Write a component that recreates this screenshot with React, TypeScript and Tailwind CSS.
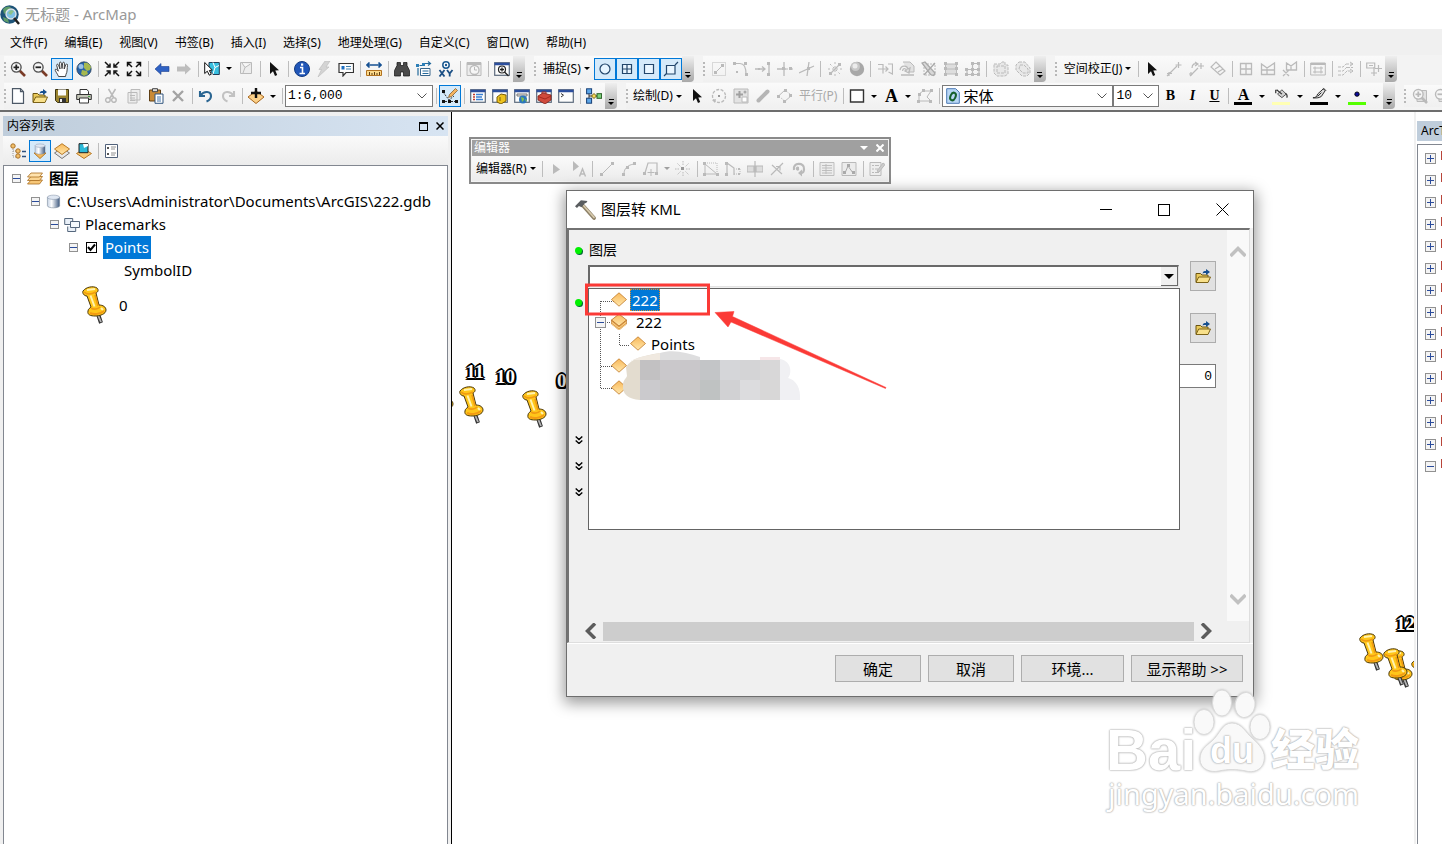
import React from "react";
import type { ReactNode } from "react";

const G = "#bababa";
const sq = (x: number, y: number, c = G, s = 3) => <rect key={`${x}-${y}`} x={x} y={y} width={s} height={s} fill={c} />;
const magnifier = (c: string, plus: boolean) => (
  <>
    <path d="M9.5 9.5 15 15" stroke={c === G ? G : "#7a3b26"} strokeWidth="2.6" />
    <circle cx="6.3" cy="6.3" r="4.8" fill="#f7f7f7" stroke={c} strokeWidth="1.4" />
    <path d={plus ? "M3.5 6.3h5.6M6.3 3.5v5.6" : "M3.5 6.3h5.6"} stroke={c === G ? G : "#222"} strokeWidth="1.8" />
  </>
);
const cursor = (c: string) => <path d="M4 1v12l3-2.7L9 15l2.2-1L9.300 9.500 13 9.200z" fill={c} />;
const win = (
  <>
    <rect x=".7" y="1.700" width="14.600" height="12.600" fill="#fdfdfd" stroke="#5d6b7d" strokeWidth="1.200" />
    <path d="M.5 3h15" stroke="#2c4f9e" strokeWidth="2.500" />
  </>
);
const folder = (
  <>
    <path d="M1 14V5.500h4.500L7 7h6v2" fill="#e9c95a" stroke="#6b5410" />
    <path d="M1 14.500 3.700 9H15.500l-2.500 5.500z" fill="#f8e08a" stroke="#7b6218" />
    <path d="M7.500 5.500C8 3 9.500 3 11 3V1l4 3-4 3V5c-1.500 0-2.500 0-3.500.500z" fill="#164f8f" />
  </>
);
const diamond = (y = 0) => <path d={`M8 ${0.8 + y} 15.500 ${7.5 + y} 8 ${14.2 + y} .500 ${7.5 + y}z`} fill="url(#amber)" stroke="#c07a2a" strokeWidth=".8" />;
const cylinder = (
  <>
    <path d="M1.500 3.500v9c0 3 13 3 13 0v-9z" fill="url(#steel)" stroke="#7a8798" strokeWidth=".6" />
    <ellipse cx="8" cy="3.500" rx="6.500" ry="2.300" fill="#dfe7f2" stroke="#8492a8" strokeWidth=".6" />
  </>
);

const art: Record<string, ReactNode> = {
  zoomIn: magnifier("#555", true),
  zoomOut: magnifier("#555", false),
  hand: <path d="M4.500 15.500C3.500 12.500.500 9.500 1.300 8.500s2 .4 3 1.700L2.700 4.500c-.3-1.500 1.300-1.800 1.800-.4L6 8 5.500 2.200C5.500.7 7.200.7 7.400 2.200L8 7.600 8.700 2C9 .8 10.500 1 10.500 2.300L10.200 8l1.600-4.300c.5-1.300 2-.8 1.700.6C13 7 13.500 11 12 13.300l-.5 2.200z" fill="#fff" stroke="#333" strokeWidth=".9" />,
  globe: (
    <>
      <circle cx="8" cy="8" r="7.200" fill="#2863a8" stroke="#23364f" strokeWidth=".7" />
      <path d="M8 2c3-1 6 1 7 4l-1 3-3 1-3-3zM6 9l5 1 1 3-4 2-3-2z" fill="#a5b84f" />
      <circle cx="5" cy="5.500" r="2.500" fill="#b7d7f5" opacity=".8" />
    </>
  ),
  shrink: <path d="M1 1l4 4M6 2.500v3.500H2.500M15 1l-4 4M10 2.500v3.500h3.500M1 15l4-4M2.500 10h3.500v3.500M15 15l-4-4M13.500 10H10v3.500" fill="none" stroke="#111" strokeWidth="1.500" />,
  expand: <path d="M2 2l4 4M1.500 5.500v-4h4M14 2l-4 4M14.500 5.500v-4h-4M2 14l4-4M1.500 10.500v4h4M14 14l-4-4M14.500 10.500v4h-4" fill="none" stroke="#111" strokeWidth="1.500" />,
  back: <path d="M1 8l6-5.500v3h8v5H7v3z" fill="#2f62c4" stroke="#1c3f8e" strokeWidth=".6" />,
  forward: <path d="M15 8 9 2.500v3H1v5h8v3z" fill="#bdbdbd" />,
  selectFeature: (
    <>
      <path d="M5 1.500h10.300v12H9L5 7z" fill="#37bfe0" stroke="#223c55" />
      <path d="M9 1.500l2 5 4-2M9 13l2-6.500" stroke="#fff" fill="none" />
      <path d="M.7 1.500v11l2.600-2.300 2 4 2-1-2-3.700 3-.5z" fill="#fff" stroke="#111" />
    </>
  ),
  clearSelect: <path d="M2.500 1.500h11v11h-11zM4 2l3 4.500 5.500-3.500M7 6.500 5 12" stroke={G} fill="#ededed" />,
  cursor: cursor("#111"),
  info: (
    <>
      <circle cx="8" cy="8" r="7.500" fill="#2056b8" stroke="#123a80" />
      <path d="M6 6.500h2.500v5.500M5.500 12.500h5.500" stroke="#fff" strokeWidth="1.600" fill="none" />
      <rect x="7" y="2.500" width="2.200" height="2.200" fill="#fff" />
    </>
  ),
  bolt: <path d="M9 0h5l-4 6h3L2 16l3.500-7.500H3z" fill="#d4d4d4" stroke={G} strokeWidth=".6" />,
  popup: (
    <>
      <path d="M1 2.500h14.500v9H8L5 15v-3.500H1z" fill="#fdfdfd" stroke="#333" strokeWidth="1.200" />
      <path d="M3.500 5h3v3.500h-3z" fill="#1c6fc2" />
      <path d="M8 5.500h5M8 8h5" stroke="#3d7fae" />
    </>
  ),
  measure: (
    <>
      <path d="M1 4h14M3.500 1.500 1 4l2.500 2.500M12.500 1.500 15 4l-2.500 2.500" stroke="#175293" strokeWidth="1.700" fill="none" />
      <path d="M.5 9.500h15v5H.5z" fill="#fcd98a" stroke="#b37320" />
      <path d="M3.500 14v-3M6 14v-2M8.500 14v-3M11 14v-2M13.500 14v-3" stroke="#5d3d10" />
    </>
  ),
  binoculars: <path d="M3 1.500h3.500v3h3v-3H13v3l2.500 5V15H9.500v-4h-3v4H.5V9.500L3 4.500z" fill="#4a4a4a" stroke="#111" strokeWidth=".7" />,
  route: (
    <>
      <path d="M4.500 7.500h9.500v7H4.500z" fill="#fff" stroke="#3a678c" />
      <path d="M6.500 10h6M6.500 12.500h6M2 14.500V7M3.500 4.500h3M9 2.500h5M12 .5l2.500 2L12 4.500" stroke="#246a9c" strokeWidth="1.200" fill="none" />
      {sq(0, 3, "#2d7fb8")}
      {sq(6, 2, "#2d7fb8")}
    </>
  ),
  xy: (
    <>
      <circle cx="8" cy="4" r="3.200" fill="#fff" stroke="#1b5990" strokeWidth="1.500" />
      <circle cx="8" cy="4" r="1.200" fill="#1b5990" />
      <path d="M1.500 9l5 6.500M6.500 9l-5 6.500M9 9l2.700 3.500L14.500 9M11.700 12.500v3" stroke="#1b4f85" strokeWidth="1.800" fill="none" />
    </>
  ),
  time: (
    <>
      <path d="M1 1.500h14v13H1z" fill="#ececec" stroke={G} />
      <path d="M1 3h14" stroke={G} strokeWidth="2" />
      <circle cx="8.500" cy="9" r="4.500" fill="#f6f6f6" stroke={G} strokeWidth="1.300" />
      <path d="M8.500 6v3H11" stroke={G} fill="none" />
    </>
  ),
  viewer: (
    <>
      {win}
      <circle cx="8" cy="8.500" r="3.500" fill="#fff" stroke="#222" strokeWidth="1.200" />
      <path d="M6 8.500h4M8 6.500v4M10.500 11l4 4" stroke="#222" strokeWidth="1.300" />
    </>
  ),
  snapPoint: <circle cx="8" cy="8" r="5" fill="#e7f5ff" stroke="#23466b" strokeWidth="1.200" />,
  snapEnd: <path d="M3.500 3.500h9v9h-9zM8 3.500v9M3.500 8h9" fill="#eaf6ff" stroke="#23466b" strokeWidth="1.200" />,
  snapVertex: <path d="M3.500 3.500h9v9h-9z" fill="#eaf6ff" stroke="#23466b" strokeWidth="1.200" />,
  snapEdge: <path d="M3.500 4.500h8.500V13H3.500zM1 15l3-3M12 4l3-3" fill="#eaf6ff" stroke="#23466b" strokeWidth="1.200" />,
  a1: <><path d="M1.500 1.500h13v13h-13z" fill="none" stroke={G} strokeDasharray="1 1" /><path d="M4 12l8-8" stroke={G} />{sq(3, 10)}{sq(10, 3)}</>,
  a2: <><path d="M1 2.500h6c4 0 6 3 6 11" fill="none" stroke={G} strokeWidth="1.200" />{sq(0, 1)}{sq(11, 1)}{sq(12, 12)}{sq(3, 10, G, 2)}</>,
  a3: <><path d="M0 8h10M7 5.500 10 8l-3 2.500M14 2v12" fill="none" stroke={G} strokeWidth="1.300" />{sq(12, 1)}{sq(12, 12)}{sq(3, 7, G, 2)}</>,
  a4: <><path d="M0 8h9M7 1v14" stroke={G} strokeWidth="1.300" /><path d="M9 8h7" stroke={G} strokeDasharray="2 1" />{sq(5, 6)}{sq(12, 6)}</>,
  a5: <><path d="M0 12 15 5M10 1 8 15" stroke={G} strokeWidth="1.300" />{sq(8, 6)}</>,
  a6: <><path d="M3 13 13 3" stroke={G} strokeWidth="1.300" /><path d="M3 3l10 10M8 1v14M1 8h14" stroke={G} strokeDasharray="2 2" />{sq(2, 11)}{sq(11, 2)}</>,
  sphere: <><circle cx="8" cy="8" r="7.200" fill="#a8a8a8" /><circle cx="6.500" cy="5.500" r="4.500" fill="#c8c8c8" /><circle cx="6" cy="5" r="2.500" fill="#ececec" /></>,
  b1: <path d="M1 3.500h5v9M1 8h10M8.500 5.500 11 8l-2.500 2.500M11 3h4.500v10l-4-2" fill="none" stroke={G} strokeWidth="1.200" />,
  b2: <><path d="M4 1h7l4 4v6H9" fill="#e2e2e2" stroke={G} /><path d="M1 9c1-5 7-5 8-1l2-1-1 5-4-2 1.500-1C6 7 4 7 3.500 10M2 14h13" fill="none" stroke={G} strokeWidth="1.300" /></>,
  b3: <><path d="M3 3h11v11H3z" fill="none" stroke={G} strokeDasharray="2 1" /><path d="M1 2l3-1 10 11-1.500 2.500-3-1zM14 2 3 14" fill="#d8d8d8" stroke="#a9a9a9" strokeWidth="1.300" /></>,
  b4: <><path d="M2.500 3h11v10h-11z M2.500 8h11" fill="#ddd" stroke={G} />{sq(1, 1)}{sq(12, 1)}{sq(1, 6)}{sq(12, 6)}{sq(1, 12)}{sq(12, 12)}</>,
  b5: <><path d="M7.500 2v12M2 8.500h12M2 14V8.500M2 13.500h12V2.500H7.500" fill="none" stroke={G} strokeWidth="1.200" />{sq(6, 1)}{sq(12, 1)}{sq(0, 7)}{sq(6, 7)}{sq(12, 7)}{sq(0, 12)}{sq(6, 12)}{sq(12, 12)}</>,
  b6: <path d="M1 3h6l2-2h3v3h3v9l-3 2H4L1 12zM4 5h8v7H4z" fill="#e8e8e8" stroke={G} strokeDasharray="3 1" />,
  b7: <path d="M4 1h6l5 6v5l-3 3H7L1 9V4zM5 4h4l4 4v4H8L4 8z" fill="#e8e8e8" stroke={G} strokeDasharray="3 1" />,
  cursor2: cursor("#111"),
  c1: <path d="M1 15 11 5M12.500 1v6M9.500 4h6M3 11v4M1 12.500h5" stroke={G} fill="none" strokeWidth="1.200" />,
  c2: <path d="M2 15l8-8M13 2v6M10 5h6M4 7c0-4 3-5 5-4M7 1l3 2-3 2M3 11v4M1 13h4" stroke={G} fill="none" strokeWidth="1.200" />,
  c3: <path d="M6 1l9 9-5 4-9-8zM5 8l5-3M8 11l5-3" stroke={G} fill="none" strokeWidth="1.200" />,
  c4: <path d="M2.500 2.500h11v11h-11zM8 2v12M2 8h12" stroke={G} fill="none" strokeWidth="1.300" />,
  c5: <path d="M1.500 3 7 7l7.500-5v11.500h-13zM1.500 9h13M7 7v6" stroke={G} fill="none" strokeWidth="1.300" />,
  c6: <path d="M4.500 2 9 5l5.500-4v8h-10zM9 5v4M1 9l6 6M7 9l-6 6" stroke={G} fill="none" strokeWidth="1.300" />,
  c7: <><path d="M.7 2h14.600v12H.7z" fill="none" stroke={G} /><path d="M.7 3h14.600" stroke={G} strokeWidth="2" /><path d="M3 7h10M3 11h10M5 5.500v7M11 5.500v7" stroke={G} /></>,
  c8: <><path d="M0 6h5l3-3M0 10h5l4-4M0 14h5l5-5M8 3h7M9 6.500h6M10 10h5" stroke={G} fill="none" strokeDasharray="3 1" /><path d="M12 1l3 2-3 2M12 8l3 2-3 2" stroke={G} /></>,
  c9: <path d="M.7 2h8v5h-8zM3 4.500h4M8 12V6M12.500 4v7M9 7.500h7M8 9v6M5 12h6" stroke={G} fill="none" strokeWidth="1.200" />,
  newDoc: <path d="M2.500.7h8l3 3v11.600h-11zM10.500.7v3h3" fill="#fdfeff" stroke="#4c5866" strokeWidth="1.200" />,
  open: folder,
  save: <><path d="M1.500 1.500h13v13h-11l-2-2z" fill="#9a8430" stroke="#3d3512" /><path d="M4 1.500h8v6H4z" fill="#fafafa" /><path d="M5 10h7v4.500H5z" fill="#333" /><path d="M6 11h2v3H6z" fill="#eee" /></>,
  print: <><path d="M4 6V1.500h7l1.500 2V6" fill="#fff" stroke="#333" /><path d="M.7 6.500h14.600v5H.7z" fill="#c4c6b8" stroke="#333" /><path d="M3.500 10h9v5h-9z" fill="#fff" stroke="#333" /><path d="M12 8.500h2" stroke="#43a047" /></>,
  cut: <path d="M4.500 1 10 10M11.500 1 6 10M5 10a2.300 2.300 0 1 0 .1 4 2.300 2.300 0 0 0-.1-4M11 10a2.300 2.300 0 1 0 .1 4 2.300 2.300 0 0 0-.1-4" stroke={G} fill="none" strokeWidth="1.500" />,
  copy: <path d="M5 1.500h9v10.500H5zM2 4.500h9V15H2zM4 7.500h5M4 10h5M4 12.500h5" fill="#ededed" stroke={G} />,
  paste: <><path d="M1.500 2h11v11h-11z" fill="#c98a35" stroke="#5e3e13" /><path d="M4.500.7h5v3h-5z" fill="#ddd" stroke="#444" /><path d="M7 6h8v9.300H7z" fill="#fff" stroke="#31557d" /><path d="M9 9h4M9 11h4M9 13h4" stroke="#4577ad" /></>,
  del: <path d="M3 3l10 10M13 3 3 13" stroke="#a3a3a3" strokeWidth="2.400" />,
  undo: <path d="M2 3v5h5M2.500 7.500C6 2.500 13 3 13 8c0 3-2 4.500-4.500 5.500" fill="none" stroke="#2a6591" strokeWidth="2.100" />,
  redo: <path d="M14 3v5H9M13.500 7.500C10 2.500 3 3 3 8c0 3 2 4.500 4.500 5.500" fill="none" stroke="#c2c2c2" strokeWidth="2.100" />,
  addData: <><path d="M8 3 16 9 8 15.500 0 9z" fill="#fbd089" stroke="#a8671e" /><path d="M8 0v10M3 5h10" stroke="#111" strokeWidth="2.400" /></>,
  sketch: <><path d="M1 4l6 8 5-4M3 13.500h11" stroke="#333" fill="none" strokeDasharray="2 1" />{sq(0, 2, "#111")}{sq(0, 12, "#111")}{sq(6, 12, "#111")}{sq(13, 12, "#111")}<path d="M6.500 9.500l1-3 6-6 2 2-6 6z" fill="#f5b461" stroke="#7a5020" strokeWidth=".7" /></>,
  winToc: <>{win}<path d="M3 6.500h2M3 9h2M3 11.500h2" stroke="#c43b2a" strokeWidth="1.300" /><path d="M6 6.500h7M6 9h6M6 11.500h7" stroke="#3b80d2" strokeWidth="1.300" /></>,
  winCat: <>{win}<path d="M5 9l4-3 5 1v6l-5 3-4-2z" fill="#edc21e" stroke="#7a5e08" /><path d="M8 9v4" stroke="#7a5e08" /></>,
  winSearch: <>{win}<path d="M3 6h10v2H3z" fill="#eee" stroke="#777" /><circle cx="9" cy="11.500" r="4" fill="#2b76bd" /><path d="M7 9l3 1v2l-2 2zM11 11l2 1-1 2z" fill="#7fbb52" /></>,
  winBox: <>{win}<path d="M2 8l5-3 8 2v5l-6 4-7-4z" fill="#d04a3c" stroke="#7d1f18" strokeWidth=".8" /><path d="M2 8.500l7 2.500 6-3M6 6V4h4v2" stroke="#a3281f" fill="none" /></>,
  winPy: <>{win}<path d="M3 5.500l2.500 1.700L3 9" stroke="#333" fill="none" /></>,
  model: <><path d="M3 4v8M3 8h10" stroke="#333" /><rect x=".6" y=".8" width="5" height="5" fill="#5da6e8" stroke="#163f75" /><rect x=".6" y="10.200" width="5" height="5" fill="#5da6e8" stroke="#163f75" /><path d="M5.500 8 8 5.500 10.500 8 8 10.500z" fill="#f7dc5a" stroke="#765f10" /><rect x="11" y="5.700" width="4.600" height="4.600" fill="#7ed17b" stroke="#275e24" /></>,
  rotate: <><circle cx="8" cy="8" r="6.500" fill="none" stroke={G} strokeDasharray="3 1.500" strokeWidth="1.300" />{sq(7, 7, "#999", 2)}<path d="M1 12l3 3 1-4z" fill={G} /></>,
  group: <><path d="M1 1h14v14H1z" fill="#e3e3e3" stroke={G} /><path d="M6.500 3v7M3 6.500h7" stroke="#a0a0a0" strokeWidth="2" /><path d="M9 9h5v5H9z" fill="#fff" stroke={G} /><circle cx="12" cy="4" r="1.500" fill="#aaa" /></>,
  pill: <path d="M3.500 12.500 12.500 3.500" stroke="#b5b5b5" strokeWidth="4" strokeLinecap="round" />,
  nodes: <><path d="M1 8.500l7-6.500M7 14l7-6" stroke={G} fill="none" /><path d="M4 10l4 3M9 3l4 3" stroke={G} strokeDasharray="1 1" />{sq(0, 7)}{sq(7, 1)}{sq(6, 12)}{sq(12, 6)}</>,
  rect: <path d="M1.500 2h13v12h-13z" fill="#fff" stroke="#333" strokeWidth="1.400" />,
  editPoly: <><path d="M2 13V6l4-3h8l-4 6 4 4z" fill="none" stroke={G} />{sq(0, 12)}{sq(1, 5)}{sq(5, 1)}{sq(13, 1)}{sq(12, 12)}</>,
  zoomPageIn: <><path d="M5 2.500h9.500v11H5z" fill="#e2e2e2" stroke={G} />{magnifier(G, true)}</>,
  zoomPageOut: <><path d="M5 2.500h9.500v11H5z" fill="#e2e2e2" stroke={G} />{magnifier(G, false)}</>,
  bucket: <><path d="M4 7l5-5 5 5-5 4z" fill="#cfcfcf" stroke="#444" /><path d="M3 2l6 5M13 6c3 2 2 4 1.500 5M2 6V2" stroke="#333" fill="none" strokeWidth="1.400" /></>,
  pen: <path d="M1 11.500c3 0 4-1 5-4L12 2l2 2-4 6c-2 1.500-5 2-9 1.500zM6 10l4-4M12 1l3 3" fill="#ddd" stroke="#222" />,
  dot: <circle cx="8" cy="7" r="2.500" fill="#0b0b9c" stroke="#000" />,
  list1: <><path d="M3 4v10h5M3 8h4" stroke="#999" fill="none" strokeDasharray="1 1" /><circle cx="3" cy="3" r="2.200" fill="#f3c06a" stroke="#a8712a" /><circle cx="8" cy="8" r="2.200" fill="#f3c06a" stroke="#a8712a" /><circle cx="8" cy="13" r="2.200" fill="#f3c06a" stroke="#a8712a" /><path d="M12 8.500h4M12 13.500h4" stroke="#2c4f7e" strokeWidth="1.600" /></>,
  list2: <><path d="M2 10l6 5.500 6-5.500z" fill="#f3b95c" stroke="#b87a26" /><g transform="translate(2 0) scale(.76)">{cylinder}</g></>,
  list3: <><path d="M8 5l7.500 5L8 15.500.5 10z" fill="#e8e8e8" stroke="#777" /><path d="M8 .7 15.500 6 8 11.500.5 6z" fill="url(#amber)" stroke="#b87a26" /></>,
  list4: <><path d="M8 6l7.500 4.500L8 15.500.5 10.500z" fill="#f9c976" stroke="#b87a26" /><path d="M3 .7h9v9H3z" fill="#2cb9d8" stroke="#222" /><path d="M7 1l1 4 4-2V1z" fill="#fff" /></>,
  list5: <><path d="M1.500 1.500h12v13h-12z" fill="#fff" stroke="#50617a" />{sq(3, 4, "#555", 2)}{sq(3, 10, "#555", 2)}<path d="M7 4h5M7 6h4M7 10h5M7 12h4" stroke="#777" strokeWidth=".8" /></>,
  layers: <><path d="M.5 14l3.500-4h11.500l-3 4z" fill="#f7c778" stroke="#a86d20" strokeWidth=".8" /><path d="M.5 10.500 4 6.500h11.500l-3 4z" fill="#fbd592" stroke="#a86d20" strokeWidth=".8" /><path d="M.5 7 4 3h11.500l-3 4z" fill="#ffe3ae" stroke="#a86d20" strokeWidth=".8" /></>,
  gdb: cylinder,
  dataset: <><path d="M.7 1.500h8v6h-8z" fill="#e9f0f8" stroke="#55677d" /><path d="M3.700 9.500v5h8v-6h-5" fill="#e9f0f8" stroke="#55677d" /><path d="M6.500 4.500h9v6h-9z" fill="#f5f9fd" stroke="#55677d" /></>,
  diamond: diamond(),
  stack: <><path d="M.5 6v4L8 16l7.500-6V6z" fill="#e2a04a" stroke="#b5702a" strokeWidth=".7" /><path d="M.5 8 8 14l7.500-6M.5 10 8 16l7.500-6" stroke="#ffe0a0" strokeWidth=".8" /><path d="M8 0l7.500 6L8 12 .5 6z" fill="url(#amber)" stroke="#b5702a" strokeWidth=".8" /></>,
  hammer: <><path d="M6 5 14.500 14.500" stroke="#8d8168" strokeWidth="2.800" strokeLinecap="round" /><path d="M6.500 5 14.500 14" stroke="#d8cbae" strokeWidth="1.200" strokeLinecap="round" /><path d="M0 5.500 4.500 1l5 .5-1 1.500-1 .3-2.500 3-2-1-1.500 1.500z" fill="#5a5d60" /></>,
  e1: <path d="M4 3v10l7-4.500z" fill={G} />,
  e2: <><path d="M2 0v10l6-4.500z" fill={G} /><path d="M8.500 15.500 11.500 8l3 7.500M9.500 13h4" stroke={G} fill="none" strokeWidth="1.400" /></>,
  e3: <><path d="M3 13 13 3" stroke={G} />{sq(1, 12)}{sq(12, 1)}</>,
  e4: <><path d="M3 13C3 7 7 4 13 3" fill="none" stroke={G} />{sq(1, 12)}{sq(5, 5)}{sq(12, 1)}</>,
  e5: <><path d="M2 12 5 2h9v10" fill="none" stroke={G} strokeWidth="1.200" />{sq(0, 11)}{sq(12, 11)}<path d="M8 8v7M4.500 11.500h7" stroke={G} /></>,
  e6: <>{sq(6, 6, "#999")}<path d="M8 0v5M8 11v5M0 8h5M11 8h5M2.500 2.500l3 3M10.500 10.500l3 3M13.500 2.500l-3 3M5.500 10.500l-3 3" stroke={G} strokeDasharray="1.500 1" /></>,
  e7: <><path d="M2 13V3l12 10z" fill="none" stroke={G} /><path d="M2 2h12v11" fill="none" stroke={G} strokeDasharray="1 1" />{sq(0, 1)}{sq(0, 12)}{sq(13, 12)}</>,
  e8: <><path d="M2 14V2l7 5v7" fill="none" stroke={G} strokeWidth="1.200" /><path d="M9 13h6V8h-5" fill="none" stroke={G} strokeDasharray="1 1" />{sq(0, 1)}{sq(0, 12)}{sq(13, 7, G, 2)}{sq(13, 12, G, 2)}</>,
  e9: <path d="M0 5h7v6H0zM9 5h7v6H9zM8 0v16" fill="#ddd" stroke={G} strokeWidth="1.200" />,
  e10: <path d="M2 14 14 2M3 4l10 9M7 5.500h4v4" fill="none" stroke={G} strokeWidth="1.200" />,
  e11: <><path d="M3 9C1 1 14 1 13 8c0 2-1 4-3 4" fill="none" stroke={G} strokeWidth="2.200" /><path d="M11 8.500 7 12l4 3.500zM8 6a2 2 0 1 0 .1 3" fill={G} /></>,
  e12: <path d="M1 1.500h14v13H1zM3 4.500h10M3 7h10M3 9.500h10M3 12h10M7 3v10" fill="#ececec" stroke={G} strokeWidth=".9" />,
  e13: <><path d="M1 1.500h14v13H1z" fill="#ececec" stroke={G} /><path d="M4 12 7 5l5 7" fill="none" stroke="#aaa" />{sq(2, 10, "#aaa")}{sq(6, 3, "#aaa")}{sq(11, 10, "#aaa")}</>,
  e14: <><path d="M1 1.500h11v13H1zM3 4.500h2M3 8h2M3 11.500h2M6 4.500h4M6 8h3M6 11.500h4" fill="#eee" stroke={G} /><path d="M8 10l6-8 2 1.500L10 11z" fill="#ccc" stroke={G} /></>,
};

function Icon({ n, s = "size-4" }: { n: string; s?: string }) {
  return (
    <svg viewBox="0 0 16 16" className={`${s} shrink-0`} fill="none" aria-hidden="true">
      {art[n]}
    </svg>
  );
}

const Caret = () => <span className="h-0 w-0 shrink-0 border-x-[3px] border-t-[3px] border-x-transparent border-t-black" />;
const Sep = () => (
  <span className="flex w-[6px] shrink-0 justify-center">
    <span className="h-4 w-px bg-[#bdbdbd]" />
  </span>
);
const Grip = () => (
  <span className="flex w-[5px] shrink-0 flex-col gap-[2px]">
    {[0, 1, 2, 3].map((i) => (
      <span key={i} className="size-[2px] bg-[#b8b8b8]" />
    ))}
  </span>
);
const Overflow = () => (
  <button aria-label="更多" className="flex h-[26px] w-3 shrink-0 flex-col items-center justify-end gap-[2px] self-end rounded-br-sm bg-linear-to-b from-[#efefef] to-[#a9a9a9] pb-1">
    <span className="h-px w-[5px] bg-black" />
    <Caret />
  </button>
);

function Tools({ names, active = false }: { names: string; active?: boolean }) {
  return (
    <>
      {names.split(" ").map((n, i) =>
        n === "|" ? (
          <Sep key={i} />
        ) : n === "v" ? (
          <button key={i} aria-label="下拉" className="flex h-[22px] w-3 shrink-0 items-center justify-center">
            <Caret />
          </button>
        ) : (
          <button
            key={i}
            aria-label={n}
            className={`flex h-[22px] w-[22px] shrink-0 items-center justify-center ${active || n === "hand" || n === "sketch" || n === "list2" ? "border border-[#0078d7] bg-[#d5eafa]" : ""}`}
          >
            <Icon n={n} />
          </button>
        ),
      )}
    </>
  );
}

const Label = ({ children, tight = false }: { children: ReactNode; tight?: boolean }) => (
  <button className={`flex shrink-0 items-center gap-[3px] pr-1 text-xs whitespace-nowrap ${tight ? "pl-[2px]" : "pl-1"}`}>
    {children}
    <Caret />
  </button>
);
const Bar = ({ children }: { children: ReactNode }) => <div className="mr-[9px] flex shrink-0 items-center bg-linear-to-b from-[#fafafa] to-[#f0f0f0]">{children}</div>;

function Combo({ label, value, w, icon }: { label: string; value: string; w: string; icon?: boolean }) {
  return (
    <div className={`relative flex h-[22px] ${w} shrink-0 items-center border border-[#7a7a7a] bg-white px-[2px]`}>
      {icon && (
        <svg viewBox="0 0 14 16" className="mx-px h-4 w-[14px] shrink-0" aria-hidden="true">
          <path d="M.7.7h9l3.600 3.600v11H.7z" fill="#b9d7f5" stroke="#4c79b4" />
          <ellipse cx="7" cy="8.500" rx="2.500" ry="4" transform="rotate(25 7 8.500)" fill="none" stroke="#16602c" strokeWidth="2" />
        </svg>
      )}
      <select aria-label={label} className={`min-w-0 flex-1 appearance-none bg-transparent outline-none ${icon ? "pl-[2px] text-[15px]" : "font-['Liberation_Mono',monospace] text-[13px]"}`}>
        <option>{value}</option>
      </select>
      <svg viewBox="0 0 10 6" className="pointer-events-none absolute right-[5px] h-[6px] w-[10px]" aria-hidden="true">
        <path d="M.5.5 5 5 9.500.5" fill="none" stroke="#555" />
      </svg>
    </div>
  );
}

function ColorTool({ label, bar, children }: { label: string; bar: string; children: ReactNode }) {
  return (
    <button aria-label={label} className="flex h-[22px] w-[38px] shrink-0 items-center justify-between pr-1 pl-[3px]">
      <span className="flex w-[18px] flex-col items-center">
        <span className="flex h-[15px] items-center justify-center font-['Liberation_Serif',serif] text-base leading-[15px] font-bold">{children}</span>
        <span className={`h-[3px] w-full ${bar}`} />
      </span>
      <Caret />
    </button>
  );
}

const Pin = () => (
  <svg viewBox="0 0 26 38" className="h-[38px] w-[26px]" aria-hidden="true">
    <path d="M16 28l3 9" stroke="#333" strokeWidth="4" />
    <path d="M16 29l3 7" stroke="#b5b5b5" strokeWidth="1.800" />
    <path d="M1 5C4 1 11-.5 15 2c2 2 1 4-1 5l3 12c4 0 7 2 7 5 0 4-6 6-11 6-4 0-8-1-7-5 0-2 2-3 3-4L5 10C2 10 0 7 1 5z" fill="#ffc61a" stroke="#4b380c" />
    <path d="M2 6c3 3 8 2 12 0M13 9l3 11M9 22c3 2 7 1 9-1" stroke="#f09a12" fill="none" strokeWidth="1.600" />
    <path d="M8.500 9.500l4 11M5 4l8-1M19 22l2 2" stroke="#fff3b0" fill="none" strokeWidth="2" />
    <path d="M8 27c4 2 10 1 14-2" stroke="#f39b12" fill="none" strokeWidth="2" />
  </svg>
);

const outline =
  "[text-shadow:2px_0_#000,-2px_0_#000,0_2px_#000,0_-2px_#000,1px_1px_#000,-1px_-1px_#000,1px_-1px_#000,-1px_1px_#000,2px_2px_#000,-2px_2px_#000]";
const MapLabel = ({ at, children }: { at: string; children: ReactNode }) => (
  <span className={`absolute ${at} font-['Liberation_Serif',serif] text-[19px] leading-5 font-bold text-white ${outline}`}>{children}</span>
);

const Expander = ({ open = true, big = false }: { open?: boolean; big?: boolean }) => (
  <button aria-label={open ? "折叠" : "展开"} className={`flex ${big ? "size-[11px]" : "size-[9px]"} shrink-0 items-center justify-center border border-[#919191] bg-[#f4f4f4]`}>
    <svg viewBox="0 0 7 7" className="size-[7px] shrink-0" aria-hidden="true">
      <path d={open ? "M0 3.500h7" : "M0 3.500h7M3.500 0v7"} stroke="#2b4c9b" />
    </svg>
  </button>
);

function Contents() {
  return (
    <aside className="flex w-[452px] shrink-0 flex-col border-r border-black bg-[#f0f0f0] pt-1 pr-[3px] pl-[3px]">
      <header className="flex h-5 items-center bg-linear-to-r from-[#bfcddb] to-[#d7e4f2] px-1 text-xs">
        <h2 className="flex-1">内容列表</h2>
        <button aria-label="最大化" className="mr-2 h-[9px] w-[9px] border border-t-2 border-black" />
        <button aria-label="关闭">
          <svg viewBox="0 0 8 8" className="size-2" aria-hidden="true">
            <path d="M.5.5l7 7M7.500.5l-7 7" stroke="#000" strokeWidth="1.500" />
          </svg>
        </button>
      </header>
      <div className="flex h-[29px] items-center bg-linear-to-b from-[#fafafa] to-[#ececec] pt-px pl-1">
        <Tools names="list1 list2 list3 list4 | list5" />
      </div>
      <ul className="flex flex-1 flex-col border border-b-0 border-[#828790] bg-white text-[15px] leading-[23px]">
        <li className="flex h-6 items-center gap-[6px] pl-2">
          <Expander />
          <Icon n="layers" />
          <b className="leading-6">图层</b>
        </li>
        <li className="flex h-[23px] items-center gap-[6px] pl-[27px] whitespace-nowrap">
          <Expander />
          <Icon n="gdb" s="size-[15px]" />
          <span>C:\Users\Administrator\Documents\ArcGIS\222.gdb</span>
        </li>
        <li className="flex h-[23px] items-center gap-[5px] pl-[46px]">
          <Expander />
          <Icon n="dataset" />
          <span>Placemarks</span>
        </li>
        <li className="flex h-[23px] items-center pl-[65px]">
          <Expander />
          <label className="flex items-center">
            <span className="relative mr-[6px] ml-2 flex">
              <input type="checkbox" defaultChecked className="size-[11px] appearance-none border border-black bg-white" />
              <svg viewBox="0 0 11 11" className="pointer-events-none absolute inset-0 size-[11px]" aria-hidden="true">
                <path d="M2 5l2.500 3L9 2.500" fill="none" stroke="#000" strokeWidth="2" />
              </svg>
            </span>
            <span className="bg-[#0078d7] px-[2px] text-white">Points</span>
          </label>
        </li>
        <li className="h-[23px] pl-[120px]">SymbolID</li>
        <li className="flex h-[46px] items-center gap-[11px] pl-[78px]">
          <Pin />
          <span>0</span>
        </li>
      </ul>
    </aside>
  );
}

function EditorBar() {
  return (
    <section className="absolute top-[25px] left-[17px] w-[422px] border-2 border-[#8a8a8a] bg-[#f4f4f4] p-px">
      <header className="flex h-4 items-center bg-[#a0a0a0] pr-1 pl-[2px] text-xs text-white">
        <h2 className="flex-1">编辑器</h2>
        <button aria-label="选项" className="mr-2 h-0 w-0 border-x-[4px] border-t-[4px] border-x-transparent border-t-white" />
        <button aria-label="关闭">
          <svg viewBox="0 0 8 8" className="size-2" aria-hidden="true">
            <path d="M.5.5l7 7M7.500.5l-7 7" stroke="#fff" strokeWidth="2" />
          </svg>
        </button>
      </header>
      <div className="flex h-[25px] items-center bg-linear-to-b from-[#fafafa] to-[#ececec]">
        <Label>编辑器(R)</Label>
        <Tools names="| e1 e2 | e3 e4 e5" />
        <span className="flex w-3 justify-center">
          <span className="h-0 w-0 border-x-[3px] border-t-[3px] border-x-transparent border-t-[#a0a0a0]" />
        </span>
        <Tools names="e6 | e7 e8 e9 e10 e11 | e12 e13 | e14" />
      </div>
    </section>
  );
}

const Blocks = () => {
  const rows = [
    ["#c2c1c2", "#cac8cb", "#c9c7ca", "#c3c5c7", "#d5d6d9", "#d4d4d6", "#d8d7d8"],
    ["#cbcacd", "#c8c7c7", "#c9c8c8", "#bfc2c2", "#d1d1d3", "#dcdcde", "#d8d7d7"],
  ];
  return (
    <svg viewBox="0 0 180 50" className="pointer-events-none absolute top-[61px] left-[33px] h-[50px] w-[180px]" aria-hidden="true">
      <path d="M4 17C10 8 20 6 38 3v9H18v38C6 49 0 44 1 35c0-5 3-6 4-9z" fill="#e3dccf" />
      <path d="M5 14C12 7 24 6 38 3v7H10z" fill="#f0e9e0" />
      <path d="M38 3c12-4 26-1 40 4v5H38z" fill="#dededf" />
      <path d="M138 7h20v5h-20z" fill="#f6e6e8" />
      <path d="M158 9c12 2 12 15 8 19 8 2 13 10 12 22h-20z" fill="#f0f0f3" />
      {rows.map((r, y) => r.map((c, x) => <rect key={`${x}${y}`} x={18 + x * 20} y={10 + y * 20} width="20" height="20" fill={c} />))}
    </svg>
  );
};

function LayerList() {
  return (
    <div className="absolute top-[58px] left-[19px] h-[242px] w-[592px] border border-[#646464] bg-white text-[15px]">
      <svg viewBox="0 0 60 110" className="pointer-events-none absolute top-0 left-0 h-[110px] w-[60px]" aria-hidden="true">
        <path d="M11.500 12v87M12 12.500h14M12 33.500h10M30.500 45v12M31 56.500h10M12 77.500h12M12 99.500h12" fill="none" stroke="#555" strokeDasharray="1 1" />
      </svg>
      <ul className="relative leading-[22px]">
        <li className="flex h-[22px] items-center gap-[3px] pl-[22px]">
          <Icon n="diamond" />
          <span className="border border-dotted border-[#e09030] bg-[#0078d7] px-px leading-5 text-white">222</span>
        </li>
        <li className="flex h-[22px] items-center gap-[5px] pl-[6px]">
          <Expander big />
          <Icon n="stack" />
          <span className="pl-1">222</span>
        </li>
        <li className="flex h-[22px] items-center gap-[5px] pl-[41px]">
          <Icon n="diamond" />
          Points
        </li>
        <li className="flex h-[22px] items-center pl-[22px]">
          <Icon n="diamond" />
        </li>
        <li className="flex h-[22px] items-center pl-[22px]">
          <Icon n="diamond" />
        </li>
      </ul>
      <Blocks />
    </div>
  );
}

const FolderButton = ({ label }: { label: string }) => (
  <button aria-label={label} className="flex h-[30px] w-[26px] items-center justify-center border border-[#adadad] bg-[#e1e1e1]">
    <Icon n="open" />
  </button>
);
const Chevron = ({ d, cls, c }: { d: string; cls: string; c: string }) => (
  <svg viewBox="0 0 16 16" className={cls} aria-hidden="true">
    <path d={d} fill="none" stroke={c} strokeWidth="3.500" />
  </svg>
);
const Bullet = () => <span className="size-[7px] shrink-0 rounded-full bg-[#00f000] shadow-[1px_1px_0_#063]" />;

function Dialog() {
  return (
    <section role="dialog" aria-label="图层转 KML" className="absolute top-[190px] left-[566px] flex h-[507px] w-[688px] flex-col border border-[#6e6e6e] bg-[#f0f0f0] shadow-[0_4px_14px_2px_rgba(0,0,0,0.4)]">
      <header className="flex h-[37px] items-center bg-white pl-2 text-[15px]">
        <Icon n="hammer" s="size-[21px]" />
        <h2 className="ml-[5px] flex-1">图层转 KML</h2>
        <div className="flex items-center gap-[46px] pr-6">
          <button aria-label="最小化" className="h-px w-3 bg-black" />
          <button aria-label="最大化" className="size-3 border border-black" />
          <button aria-label="关闭">
            <svg viewBox="0 0 13 13" className="size-[13px]" aria-hidden="true">
              <path d="M.5.5l12 12M12.500.5l-12 12" stroke="#000" />
            </svg>
          </button>
        </div>
      </header>
      <div className="mr-[3px] flex h-[415px] flex-col border-t-2 border-r border-b border-l-2 border-[#dedede] border-t-[#727272] border-l-[#727272]">
        <div className="relative flex flex-1">
          <div className="flex flex-1 flex-col pt-[10px] pr-[11px] pl-[6px]">
            <label htmlFor="layer" className="flex items-center gap-[7px] text-sm leading-5">
              <Bullet />
              图层
            </label>
            <div className="mt-px flex items-center gap-[11px] pl-[13px]">
              <div className="relative h-[22px] flex-1">
                <select id="layer" className="h-[22px] w-full appearance-none border border-t-2 border-l-2 border-[#e3e3e3] border-t-[#696969] border-l-[#696969] bg-white" />
                <span className="pointer-events-none absolute top-[2px] right-px flex h-[19px] w-[17px] items-center justify-center border-r border-b border-[#696969] bg-[#f0f0f0]">
                  <span className="h-0 w-0 border-x-[5px] border-t-[5px] border-x-transparent border-t-black" />
                </span>
              </div>
              <FolderButton label="浏览图层" />
            </div>
            <div className="flex h-[22px] items-center">
              <Bullet />
            </div>
            <div className="flex justify-end">
              <FolderButton label="浏览输出" />
            </div>
            <div className="flex justify-end pt-[21px]">
              <input aria-label="比例" defaultValue="0" className="h-6 w-[120px] border border-[#7a7a7a] bg-white px-[3px] text-right font-['Liberation_Mono',monospace] text-[13px]" />
            </div>
            <div className="mt-12 flex w-2 flex-col gap-[18px]">
              {[0, 1, 2].map((i) => (
                <button key={i} aria-label="展开" className="flex">
                  <svg viewBox="0 0 8 8" className="size-2" aria-hidden="true">
                    <path d="M.7.5 4 3.500 7.300.5M.7 4.500 4 7.500 7.300 4.500" fill="none" stroke="#000" strokeWidth="1.400" />
                  </svg>
                </button>
              ))}
            </div>
          </div>
          <div className="flex w-[22px] flex-col items-center justify-between bg-[#f9f9f9] py-[14px]">
            <Chevron cls="size-4" c="#c1c1c1" d="M.5 12 8 4.500 15.500 12" />
            <Chevron cls="size-4" c="#c1c1c1" d="M.5 4 8 11.500 15.500 4" />
          </div>
          <LayerList />
        </div>
        <div className="flex h-[21px] items-center gap-1 pr-[35px] pb-px pl-[14px]">
          <Chevron cls="size-4" c="#5c5c5c" d="M12 .5 4.500 8 12 15.500" />
          <span className="h-[19px] flex-1 bg-[#cdcdcd]" />
          <Chevron cls="size-4" c="#5c5c5c" d="M4 .5 11.500 8 4 15.500" />
        </div>
      </div>
      <footer className="flex flex-1 justify-end gap-[7px] border-t border-white pt-[11px] pr-[10px] text-[15px] leading-6">
        <button className="h-[27px] w-[86px] border border-[#adadad] bg-[#e1e1e1]">确定</button>
        <button className="h-[27px] w-[86px] border border-[#adadad] bg-[#e1e1e1]">取消</button>
        <button className="h-[27px] w-[103px] border border-[#adadad] bg-[#e1e1e1]">环境...</button>
        <button className="h-[27px] w-[112px] border border-[#adadad] bg-[#e1e1e1]">显示帮助 &gt;&gt;</button>
      </footer>
    </section>
  );
}

function Annotation() {
  return (
    <svg viewBox="0 0 304 108" className="pointer-events-none absolute top-[282px] left-[584px] h-[108px] w-[304px]" aria-hidden="true">
      <rect x="2.500" y="3" width="122" height="29" fill="none" stroke="#fb3a36" strokeWidth="3" />
      <path d="M131 30.500l19-1-1.500 5L302 105.500l-.5 1L147 40l-3 5z" fill="#fb3a36" stroke="#fb3a36" strokeWidth=".5" />
    </svg>
  );
}

function Watermark() {
  const glow = "[text-shadow:0_0_2px_#aaa,0_0_2px_#bbb,0_0_1px_#ccc]";
  return (
    <div className="pointer-events-none absolute top-[689px] left-[1106px] h-[126px] w-[260px] text-white">
      <span className={`absolute top-[36px] left-0 font-['Liberation_Sans',sans-serif] text-[58px] leading-[50px] font-bold ${glow}`}>Bai</span>
      <svg viewBox="0 0 80 86" className="absolute top-0 left-[86px] h-[86px] w-20 drop-shadow-[0_0_1px_#bbb]" aria-hidden="true">
        <g fill="#fff" fillOpacity=".9" stroke="#dadada">
          <ellipse cx="12" cy="33" rx="10" ry="12.500" />
          <ellipse cx="30" cy="14" rx="9.500" ry="13" />
          <ellipse cx="53" cy="16" rx="10" ry="12.500" transform="rotate(8 53 16)" />
          <ellipse cx="68" cy="38" rx="10" ry="12.500" />
          <path d="M40 34c10 0 14 10 20 15 8 7 14 14 12 23-2 10-12 12-18 10-10-2-18-2-27 0-9 2-19-2-19-12 0-9 6-13 12-18 8-7 10-18 20-18z" />
        </g>
      </svg>
      <span className={`absolute top-[42px] left-[104px] font-['Liberation_Sans',sans-serif] text-[36px] leading-[40px] font-bold ${glow}`}>du</span>
      <span className={`absolute top-[38px] left-[165px] text-[44px] leading-[44px] font-black ${glow}`}>经验</span>
      <span className={`absolute top-[90px] left-[2px] text-[29px] leading-[30px] ${glow}`}>jingyan.baidu.com</span>
    </div>
  );
}

const menus = ["文件(F)", "编辑(E)", "视图(V)", "书签(B)", "插入(I)", "选择(S)", "地理处理(G)", "自定义(C)", "窗口(W)", "帮助(H)"];

export default function App() {
  return (
    <div className="relative flex h-screen flex-col overflow-hidden bg-white font-['Noto_Sans','Noto_Sans_CJK_SC',sans-serif] text-black">
      <svg className="absolute h-0 w-0" aria-hidden="true">
        <defs>
          <linearGradient id="amber" x1="0" y1="0" x2="0" y2="1">
            <stop offset="0" stopColor="#f9b95a" />
            <stop offset="1" stopColor="#ffe7ac" />
          </linearGradient>
          <linearGradient id="steel">
            <stop offset="0" stopColor="#c5d2e4" />
            <stop offset=".35" stopColor="#fff" />
            <stop offset="1" stopColor="#3f5a80" />
          </linearGradient>
        </defs>
      </svg>
      <header className="flex h-[29px] shrink-0 items-center gap-[5px] text-[15px] text-[#999]">
        <svg viewBox="0 0 20 20" className="size-5" aria-hidden="true">
          <circle cx="9.500" cy="9.500" r="9.200" fill="#1d5378" />
          <path d="M3 4c3-3 6-3 8-2L8 6 4 9zM3 12l5 2 1 4-5-2z" fill="#5f9c6a" />
          <circle cx="11" cy="9" r="5" fill="#7fc0e4" stroke="#dfe5e8" strokeWidth="1.400" />
          <path d="M8 8l3-3 3 1-3 4z" fill="#8cc28a" />
          <path d="M14 13l5 6" stroke="#222" strokeWidth="2.500" />
        </svg>
        <h1>无标题 - ArcMap</h1>
      </header>
      <nav className="flex h-[26px] shrink-0 items-center gap-[17px] bg-[#f0f0f0] pt-px pl-[10px] text-xs whitespace-nowrap">
        {menus.map((m) => (
          <button key={m}>{m}</button>
        ))}
      </nav>
      <div className="flex h-[27px] shrink-0 items-center overflow-hidden bg-[#f3f3f3] pl-1">
        <Bar>
          <span className="-mr-[2px] flex">
            <Grip />
          </span>
          <Tools names="zoomIn zoomOut hand globe | shrink expand | back forward | selectFeature v clearSelect | cursor | info bolt popup | measure | binoculars route xy | time | viewer" />
          <Overflow />
        </Bar>
        <Bar>
          <Grip />
          <Label>捕捉(S)</Label>
          <Tools active names="snapPoint snapEnd snapVertex snapEdge" />
          <Overflow />
        </Bar>
        <Bar>
          <Grip />
          <Tools names="a1 a2 a3 a4 a5 | a6 sphere | b1 b2 b3 b4 b5 | b6 b7" />
          <Overflow />
        </Bar>
        <Bar>
          <Grip />
          <Label>空间校正(J)</Label>
          <Tools names="| cursor2 c1 c2 c3 | c4 c5 c6 | c7 | c8 | c9" />
          <Overflow />
        </Bar>
      </div>
      <div className="flex h-7 shrink-0 items-center overflow-hidden bg-[#f3f3f3] pl-1">
        <Bar>
          <span className="-mr-[2px] flex">
            <Grip />
          </span>
          <Tools names="newDoc open save print | cut copy paste del | undo redo | addData v |" />
          <Combo label="比例尺" value="1:6,000" w="w-[148px]" />
          <Tools names="| sketch | winToc winCat winSearch winBox winPy | model" />
          <Overflow />
        </Bar>
        <Bar>
          <Grip />
          <Label tight>绘制(D)</Label>
          <Tools names="cursor rotate group pill nodes" />
          <span className="shrink-0 px-[3px] text-xs text-[#a9a9a9]">平行(P)</span>
          <Tools names="| rect v" />
          <button aria-label="文本" className="h-[22px] w-[22px] shrink-0 font-['Liberation_Serif',serif] text-lg leading-[22px] font-bold">
            A
          </button>
          <Tools names="v editPoly |" />
          <Combo label="字体" value="宋体" w="w-[171px]" icon />
          <Combo label="字号" value="10" w="w-[46px]" />
          <button className="w-[22px] shrink-0 font-['Liberation_Serif',serif] text-sm font-bold">B</button>
          <button className="w-[22px] shrink-0 font-['Liberation_Serif',serif] text-sm font-bold italic">I</button>
          <button className="w-[22px] shrink-0 font-['Liberation_Serif',serif] text-sm font-bold underline">U</button>
          <Sep />
          <ColorTool label="字体颜色" bar="bg-black">
            A
          </ColorTool>
          <ColorTool label="填充颜色" bar="bg-[#ffffb4]">
            <Icon n="bucket" s="size-[14px]" />
          </ColorTool>
          <ColorTool label="线颜色" bar="bg-black">
            <Icon n="pen" s="size-[15px]" />
          </ColorTool>
          <ColorTool label="标记颜色" bar="bg-[#55ff00]">
            <Icon n="dot" s="size-[14px]" />
          </ColorTool>
          <Overflow />
        </Bar>
        <Bar>
          <Grip />
          <Tools names="zoomPageIn zoomPageOut" />
        </Bar>
      </div>
      <main className="flex min-h-0 flex-1 border-t-2 border-[#6d6d6d]">
        <Contents />
        <section aria-label="地图" className="relative min-w-0 flex-1 overflow-hidden bg-white">
          <EditorBar />
          <span className="absolute top-[274px] left-[7px]">
            <Pin />
          </span>
          <span className="absolute top-[278px] left-[70px]">
            <Pin />
          </span>
          <span className="absolute top-[268px] -left-[23px]">
            <Pin />
          </span>
          <MapLabel at="top-[250px] left-[14px]">11</MapLabel>
          <MapLabel at="top-[255px] left-[44px]">10</MapLabel>
          <MapLabel at="top-[259px] left-[105px]">0</MapLabel>
          <span className="absolute top-[521px] left-[907px]">
            <Pin />
          </span>
          <span className="absolute top-[538px] left-[936px]">
            <Pin />
          </span>
          <span className="absolute top-[536px] left-[931px]">
            <Pin />
          </span>
          <span className="absolute top-[546px] left-[959px]">
            <Pin />
          </span>
          <MapLabel at="top-[502px] left-[944px]">12</MapLabel>
        </section>
        <aside className="flex w-7 shrink-0 flex-col overflow-hidden border-l-2 border-[#f0f0f0] pt-[9px] pl-px">
          <h2 className="mb-[3px] h-5 shrink-0 bg-[#bfcddb] pl-1 text-xs leading-5 whitespace-nowrap">ArcToolbox</h2>
          <ul className="flex-1 border-t border-l border-[#828790] pt-[2px]">
            {Array.from({ length: 15 }, (_, i) => (
              <li key={i} className="flex h-[22px] items-center justify-between pl-[7px]">
                <Expander big open={i === 14} />
                <span className="mb-[6px] h-[9px] w-px bg-[#b8453a]" />
              </li>
            ))}
          </ul>
        </aside>
      </main>
      <Dialog />
      <Annotation />
      <Watermark />
    </div>
  );
}
